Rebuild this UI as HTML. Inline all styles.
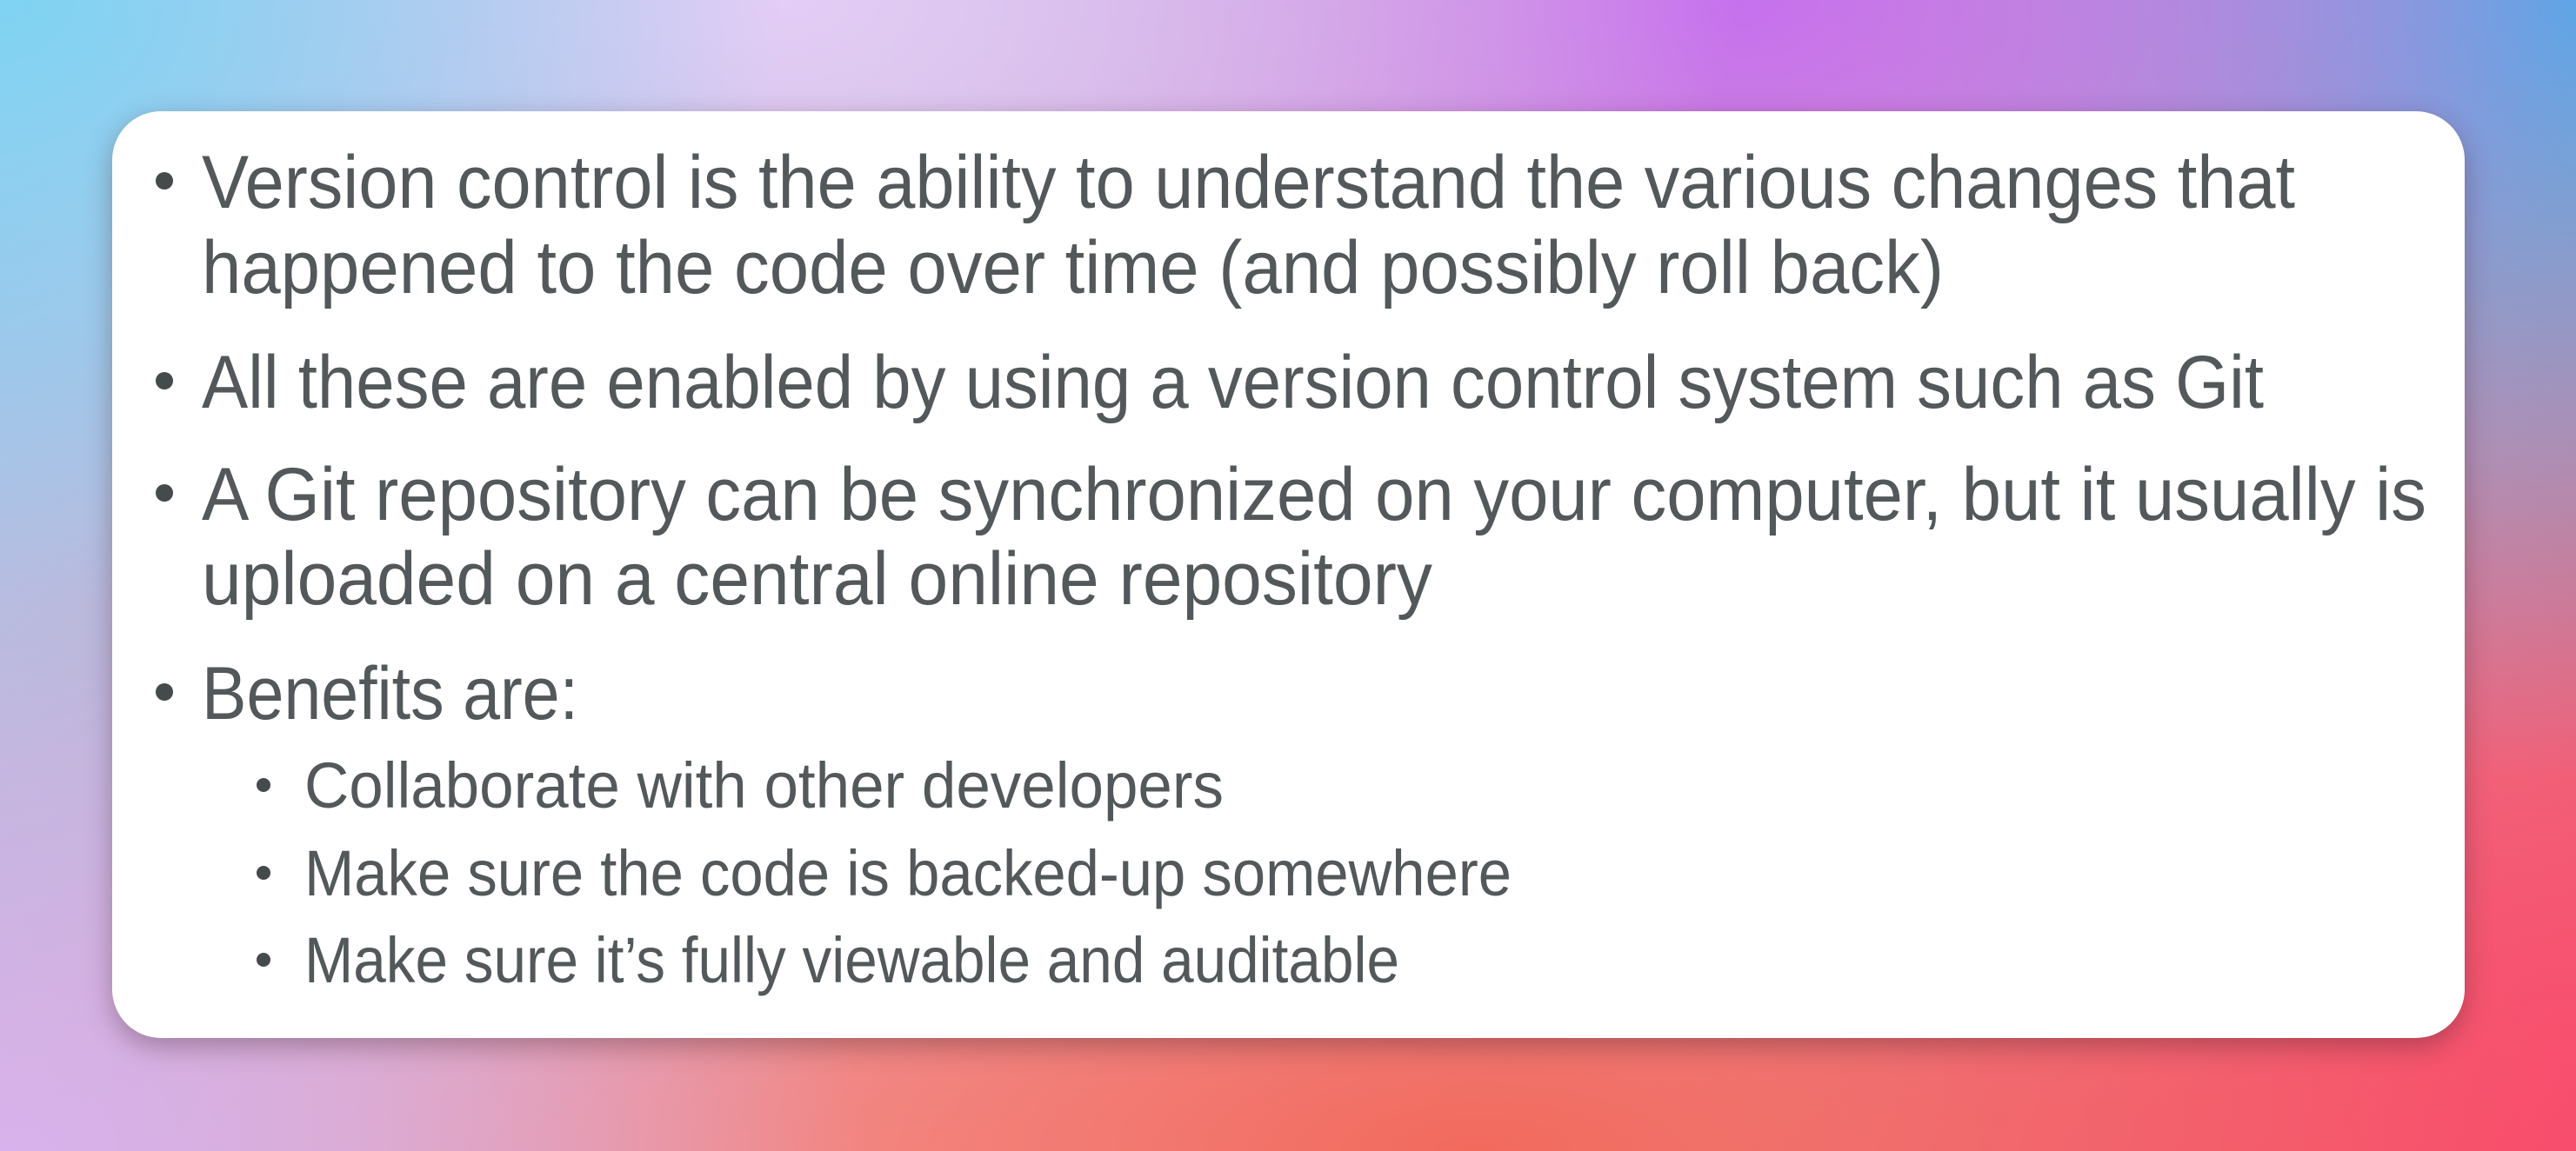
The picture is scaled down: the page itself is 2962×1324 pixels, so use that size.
<!DOCTYPE html>
<html><head><meta charset="utf-8"><style>
html,body{margin:0;padding:0;width:2962px;height:1324px;overflow:hidden}
body{position:relative;background:
radial-gradient(ellipse 900px 700px at 0px 0px,#7fd3f2 0%,rgba(127,211,242,0) 100%),
radial-gradient(ellipse 1100px 600px at 900px 0px,#e4cdf6 0%,rgba(228,205,246,0) 100%),
radial-gradient(ellipse 1000px 650px at 2000px 0px,#c670ee 0%,rgba(198,112,238,0) 100%),
radial-gradient(ellipse 900px 900px at 2962px 0px,#5aa8e6 0%,rgba(90,168,230,0) 100%),
radial-gradient(ellipse 1000px 600px at 0px 1324px,#d8b2ec 0%,rgba(216,178,236,0) 100%),
radial-gradient(ellipse 1300px 500px at 1700px 1324px,#f26a5c 0%,rgba(242,106,92,0) 100%),
radial-gradient(ellipse 1200px 600px at 1100px 1324px,#f59a9a 0%,rgba(245,154,154,0) 100%),
radial-gradient(ellipse 1100px 800px at 2962px 1324px,#f94c6e 0%,rgba(249,76,110,0) 100%),
linear-gradient(135deg,#a9c8ee,#e29ab8 60%,#f0606a);}
.card{position:absolute;left:129px;top:128px;width:2705px;height:1066px;background:#fff;border-radius:56px;box-shadow:0 10px 30px rgba(60,30,40,0.35)}
svg{position:absolute;left:0;top:0}
text{font-family:"Liberation Sans",sans-serif;fill:#53585a}
</style></head><body>
<div class="card"></div>
<svg width="2962" height="1324">
<g fill="#454a4b">
<circle cx="189" cy="208" r="10"/><circle cx="189" cy="438" r="10"/><circle cx="189" cy="567" r="10"/><circle cx="189" cy="796" r="10"/>
<circle cx="303" cy="903" r="8"/><circle cx="303" cy="1004" r="8"/><circle cx="303" cy="1104" r="8"/>
</g>
<g font-size="86">
<text x="232" y="239" textLength="2407" lengthAdjust="spacingAndGlyphs">Version control is the ability to understand the various changes that</text>
<text x="232" y="337" textLength="2003" lengthAdjust="spacingAndGlyphs">happened to the code over time (and possibly roll back)</text>
<text x="232" y="469" textLength="2371" lengthAdjust="spacingAndGlyphs">All these are enabled by using a version control system such as Git</text>
<text x="232" y="598" textLength="2558" lengthAdjust="spacingAndGlyphs">A Git repository can be synchronized on your computer, but it usually is</text>
<text x="232" y="695" textLength="1415" lengthAdjust="spacingAndGlyphs">uploaded on a central online repository</text>
<text x="232" y="827" textLength="433" lengthAdjust="spacingAndGlyphs">Benefits are:</text>
</g>
<g font-size="74">
<text x="350" y="929" textLength="1057" lengthAdjust="spacingAndGlyphs">Collaborate with other developers</text>
<text x="350" y="1030" textLength="1388" lengthAdjust="spacingAndGlyphs">Make sure the code is backed-up somewhere</text>
<text x="350" y="1130" textLength="1259" lengthAdjust="spacingAndGlyphs">Make sure it’s fully viewable and auditable</text>
</g>
</svg>
</body></html>
